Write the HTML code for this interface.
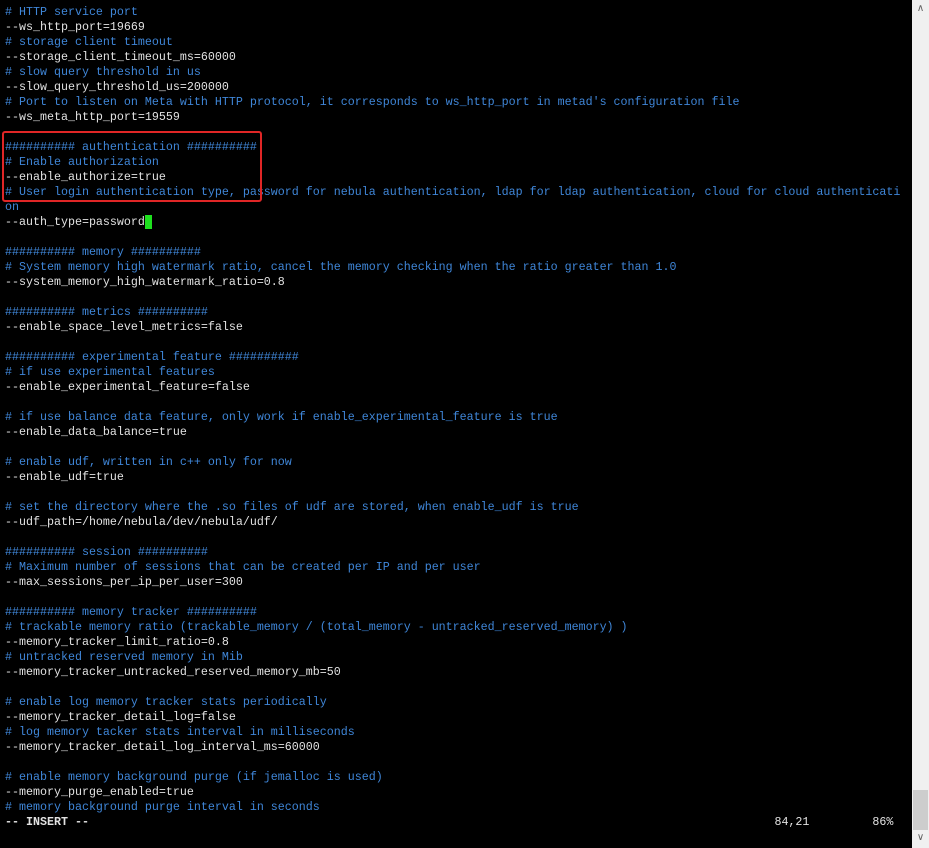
<!DOCTYPE html>
<html><head><meta charset="utf-8"><style>
html,body{margin:0;padding:0;background:#000;width:929px;height:848px;overflow:hidden}
pre{margin:0;position:absolute;left:5px;top:5px;font-family:"Liberation Mono",monospace;font-size:11.66px;line-height:15px;color:#e2e2e2;white-space:pre}
.c{color:#3f86d8}
.b{font-weight:bold}
.cur{background:#1ee01e;color:#1ee01e}
#box{position:absolute;left:2px;top:131px;width:256px;height:67px;border:2px solid #e02626;border-radius:3px}
#sb{position:absolute;left:912px;top:0;width:17px;height:848px;background:#f0f0f0}
#th{position:absolute;left:913px;top:790px;width:15px;height:40px;background:#cdcdcd}
.ar{position:absolute;left:913px;width:15px;text-align:center;font:10px "DejaVu Sans",sans-serif;color:#606060}
</style></head><body>
<pre><span class="c"># HTTP service port</span>
--ws_http_port=19669
<span class="c"># storage client timeout</span>
--storage_client_timeout_ms=60000
<span class="c"># slow query threshold in us</span>
--slow_query_threshold_us=200000
<span class="c"># Port to listen on Meta with HTTP protocol, it corresponds to ws_http_port in metad's configuration file</span>
--ws_meta_http_port=19559

<span class="c">########## authentication ##########</span>
<span class="c"># Enable authorization</span>
--enable_authorize=true
<span class="c"># User login authentication type, password for nebula authentication, ldap for ldap authentication, cloud for cloud authenticati</span>
<span class="c">on</span>
--auth_type=password<span class="cur"> </span>

<span class="c">########## memory ##########</span>
<span class="c"># System memory high watermark ratio, cancel the memory checking when the ratio greater than 1.0</span>
--system_memory_high_watermark_ratio=0.8

<span class="c">########## metrics ##########</span>
--enable_space_level_metrics=false

<span class="c">########## experimental feature ##########</span>
<span class="c"># if use experimental features</span>
--enable_experimental_feature=false

<span class="c"># if use balance data feature, only work if enable_experimental_feature is true</span>
--enable_data_balance=true

<span class="c"># enable udf, written in c++ only for now</span>
--enable_udf=true

<span class="c"># set the directory where the .so files of udf are stored, when enable_udf is true</span>
--udf_path=/home/nebula/dev/nebula/udf/

<span class="c">########## session ##########</span>
<span class="c"># Maximum number of sessions that can be created per IP and per user</span>
--max_sessions_per_ip_per_user=300

<span class="c">########## memory tracker ##########</span>
<span class="c"># trackable memory ratio (trackable_memory / (total_memory - untracked_reserved_memory) )</span>
--memory_tracker_limit_ratio=0.8
<span class="c"># untracked reserved memory in Mib</span>
--memory_tracker_untracked_reserved_memory_mb=50

<span class="c"># enable log memory tracker stats periodically</span>
--memory_tracker_detail_log=false
<span class="c"># log memory tacker stats interval in milliseconds</span>
--memory_tracker_detail_log_interval_ms=60000

<span class="c"># enable memory background purge (if jemalloc is used)</span>
--memory_purge_enabled=true
<span class="c"># memory background purge interval in seconds</span>
<span class="b">-- INSERT --</span>                                                                                                  84,21         86%</pre>
<div id="box"></div>
<div id="sb"></div><div id="th"></div>
<div class="ar" style="top:3px">&#x2227;</div>
<div class="ar" style="top:832px">&#x2228;</div>
</body></html>
